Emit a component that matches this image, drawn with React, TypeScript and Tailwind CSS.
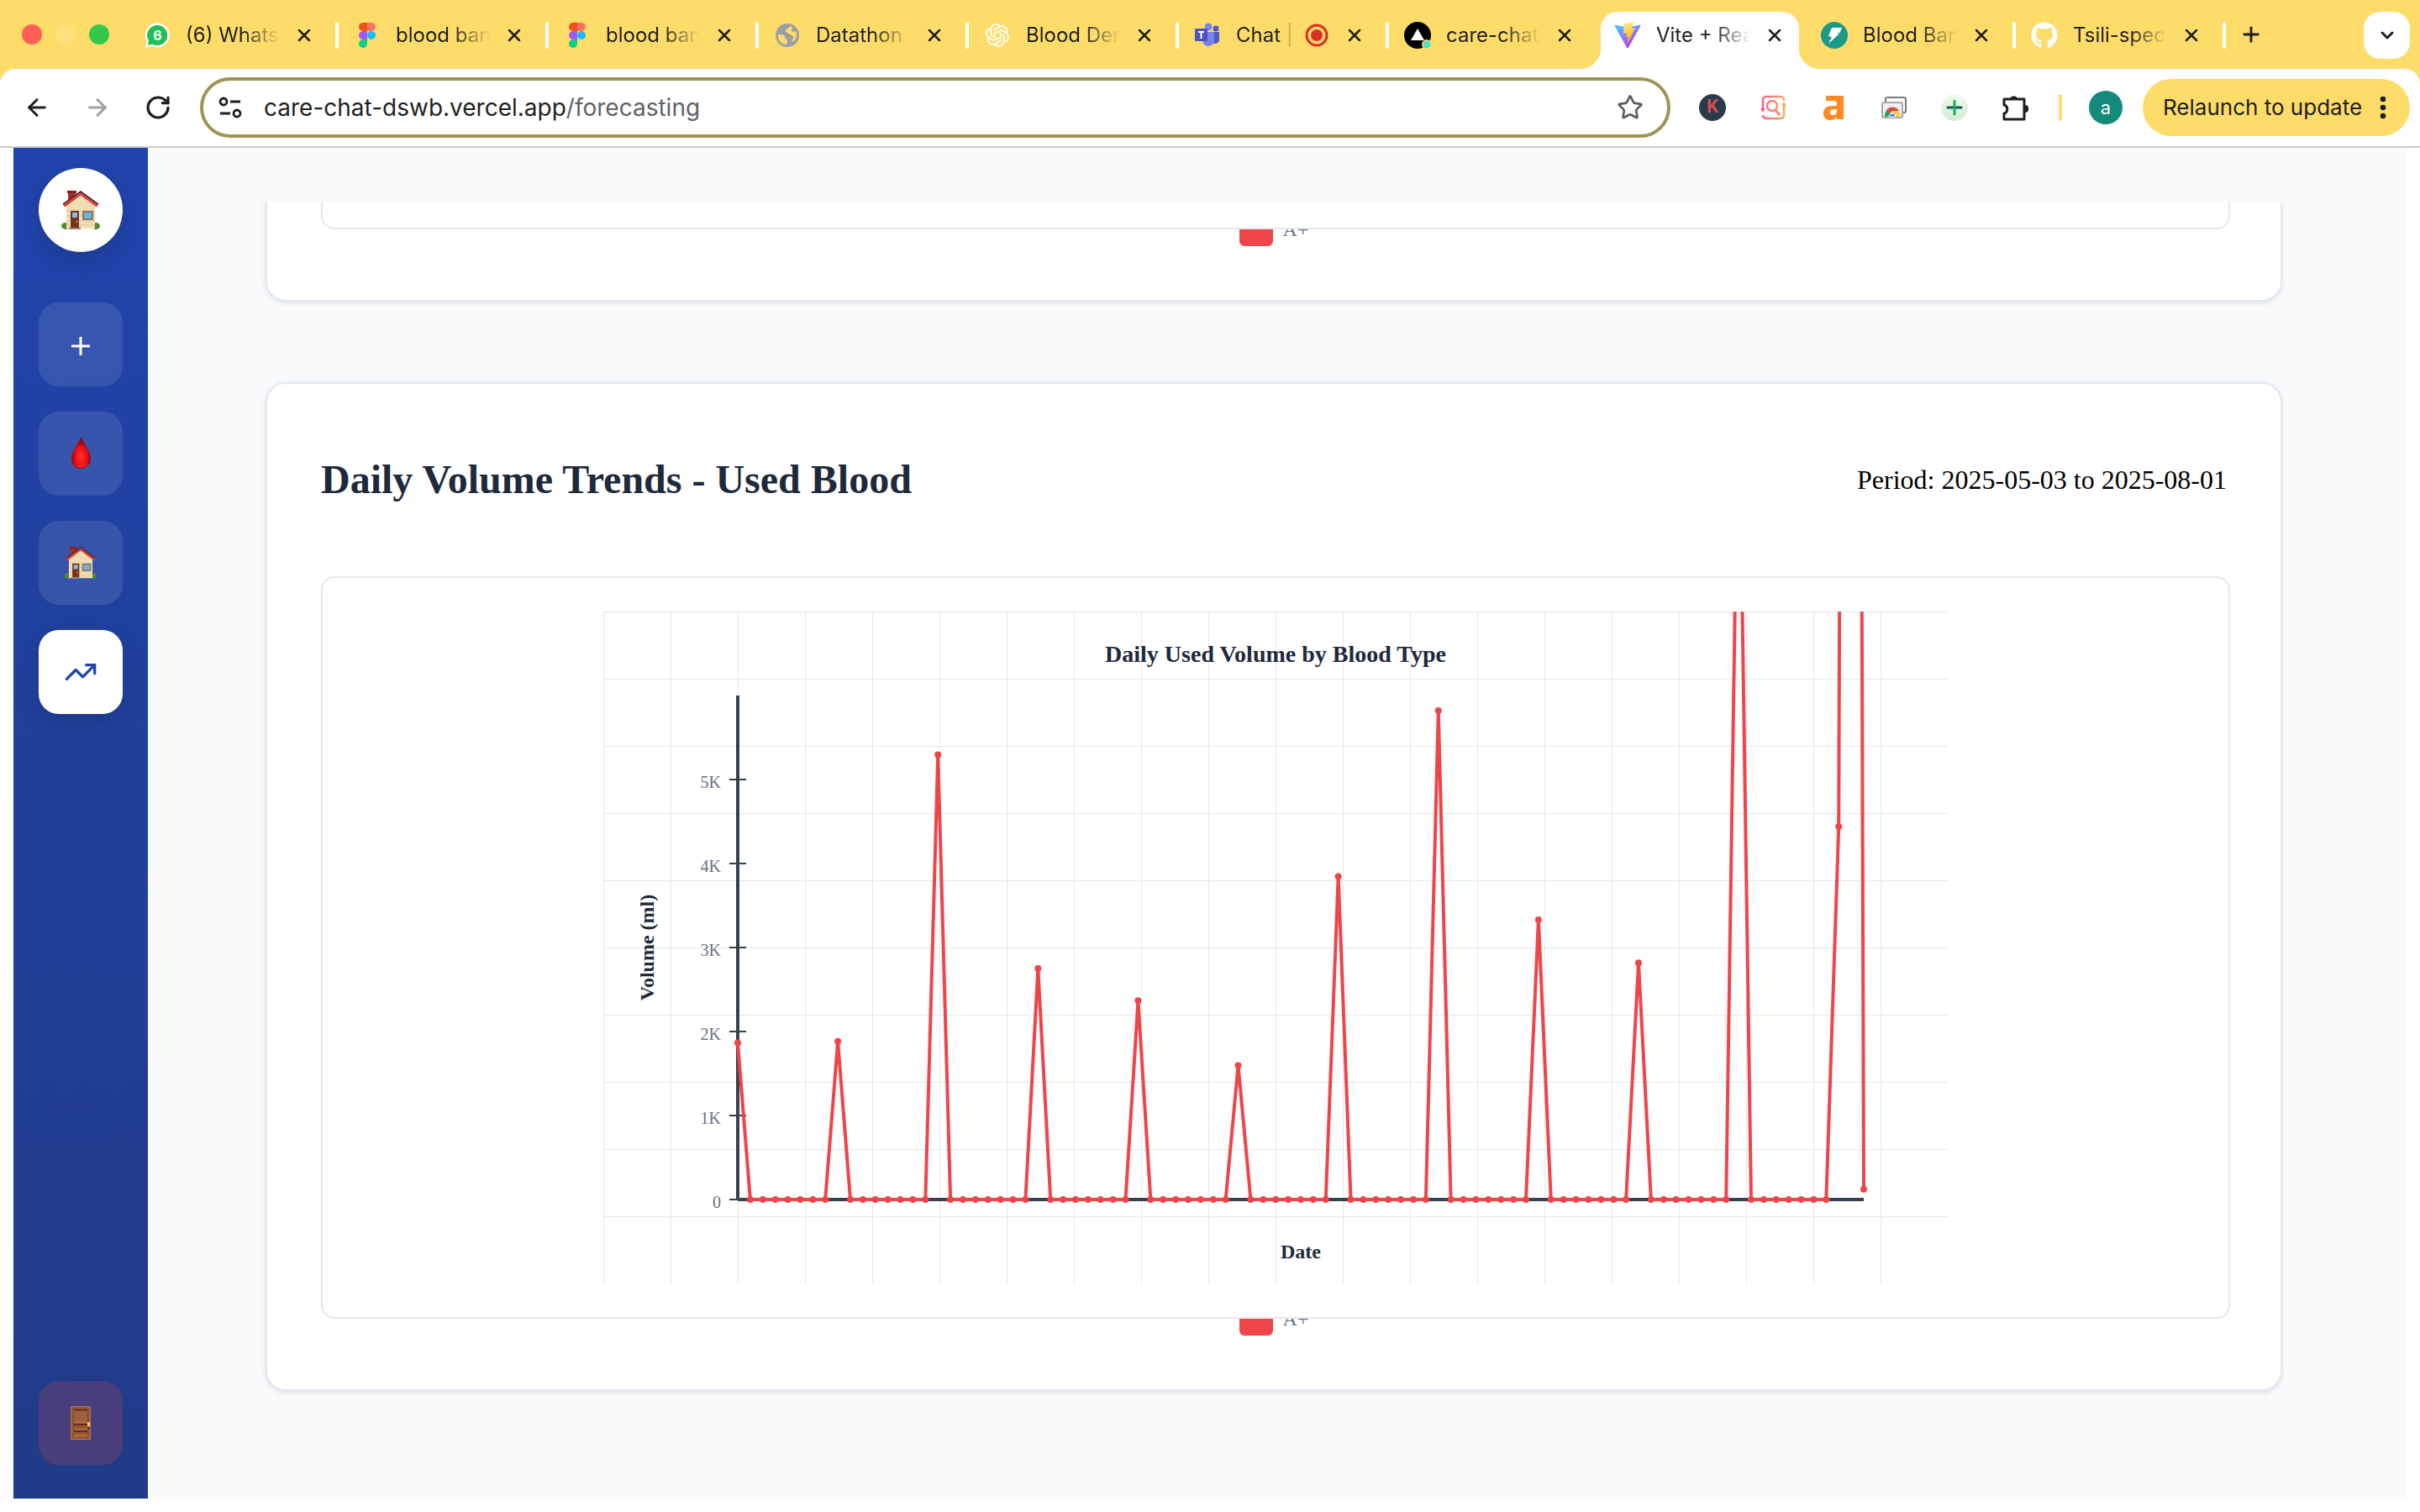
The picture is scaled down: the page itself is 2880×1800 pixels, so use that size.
import React from "react";
import { FaGithub } from "react-icons/fa";
import { SiOpenai } from "react-icons/si";
import { ArrowLeft, ArrowRight, ChevronDown, Plus, RotateCw, Star, TrendingUp, X } from "lucide-react";

/* ---------- favicons ---------- */

function WhatsAppIcon() {
  return (
    <svg viewBox="0 0 32 32" className="size-8">
      <path d="M2 31 L3.6 23 A14.6 14.6 0 1 1 9.5 28.8 Z" fill="#fff" />
      <path d="M5 28 L6 22.5 A12 12 0 1 1 10 26.4 Z" fill="#1fbf55" />
      <text x="16.5" y="22" textAnchor="middle" fontSize="16" fontWeight="700" fill="#fff" fontFamily="Inter, sans-serif">
        6
      </text>
    </svg>
  );
}

function FigmaIcon() {
  return (
    <svg viewBox="0 0 32 32" className="size-8">
      <path d="M11 1h5v10h-5a5 5 0 0 1 0-10Z" fill="#f24e1e" />
      <path d="M16 1h5a5 5 0 0 1 0 10h-5Z" fill="#ff7262" />
      <path d="M11 11h5v10h-5a5 5 0 0 1 0-10Z" fill="#a259ff" />
      <circle cx="21" cy="16" r="5" fill="#1abcfe" />
      <path d="M11 21h5v5a5 5 0 1 1-5-5Z" fill="#0acf83" />
    </svg>
  );
}

function GlobeIcon() {
  return (
    <svg viewBox="0 0 32 32" className="size-8">
      <circle cx="16" cy="16" r="14" fill="#9a9fa5" />
      <path d="M5 15c4 0 8 0 8 3 0 2 3 2 3 5 0 1-1 2-1 4-6 0-11-6-10-12Z" fill="#fedc69" />
      <path d="M19 5c-1 3-5 3-5 6 0 2 4 2 4 4 3 0 5 1 5 4 0 2-2 3-1 5 5-3 6-9 4-13-2 1-5 1-5-1 0-2 1-3 1-4Z" fill="#fedc69" />
    </svg>
  );
}

function TeamsIcon() {
  return (
    <svg viewBox="0 0 32 32" className="size-8">
      <circle cx="26" cy="8" r="3.5" fill="#5059c9" />
      <path d="M21 12h9v9a5 5 0 0 1-9 3Z" fill="#5059c9" />
      <circle cx="17" cy="6" r="4.5" fill="#7b83eb" />
      <path d="M10 12h14v10a7 7 0 0 1-14 0Z" fill="#7b83eb" />
      <rect x="1" y="8" width="15" height="15" rx="1" fill="#4b53bc" />
      <path d="M5 12h7M8.500 12v8" stroke="#fff" strokeWidth="2" />
    </svg>
  );
}

function VercelIcon() {
  return (
    <svg viewBox="0 0 32 32" className="size-8">
      <circle cx="16" cy="16" r="16" fill="#000" />
      <path d="M16 8 L24 22 H8 Z" fill="#fff" />
      <circle cx="27" cy="27" r="6" fill="#fedc69" />
      <circle cx="27" cy="27" r="4.500" fill="#50e3c2" />
    </svg>
  );
}

function ViteIcon() {
  return (
    <svg viewBox="0 0 32 32" className="size-8">
      <defs>
        <linearGradient id="vite-a" x1="0" y1="0" x2="0.6" y2="1">
          <stop offset="0" stopColor="#41d1ff" />
          <stop offset="1" stopColor="#bd34fe" />
        </linearGradient>
        <linearGradient id="vite-b" x1="0.4" y1="0" x2="0.6" y2="1">
          <stop offset="0" stopColor="#ffea83" />
          <stop offset="1" stopColor="#ffa800" />
        </linearGradient>
      </defs>
      <path d="M31.300 5 16.800 31a.8.8 0 0 1-1.400 0L.6 5a.8.8 0 0 1 .8-1.200L16 6.400l14.500-2.600a.8.8 0 0 1 .8 1.200Z" fill="url(#vite-a)" />
      <path d="M22.500 0 12 2.100a.4.4 0 0 0-.3.400L11 13.400c0 .3.200.5.500.4l3-.7c.3 0 .5.200.5.500l-.9 4.300c0 .3.200.5.500.5l1.800-.6c.3 0 .6.200.5.500l-1.400 6.700c-.1.400.5.600.7.300L25 7.700c.2-.3-.1-.6-.4-.6l-3.100.6c-.3 0-.500-.2-.500-.5l2-6.800c.1-.3-.2-.4-.5-.4Z" fill="url(#vite-b)" />
    </svg>
  );
}

function BoltIcon() {
  return (
    <svg viewBox="0 0 32 32" className="size-8">
      <circle cx="16" cy="16" r="16" fill="#1c9a88" />
      <path d="M13 7h12l-2.500 6h-4l3.500 1L9 26l4-8-4-1Z" fill="#fff" />
    </svg>
  );
}

/* ---------- sidebar drawings ---------- */

function House({ className }: { className: string }) {
  return (
    <svg viewBox="0 0 46 46" className={className}>
      <ellipse cx="5" cy="42" rx="5" ry="4" fill="#4f8a2c" />
      <ellipse cx="41" cy="42" rx="5" ry="4" fill="#4f8a2c" />
      <rect x="8" y="1" width="9" height="14" fill="#a32f2b" />
      <rect x="7" y="0" width="11" height="3" fill="#7c2421" />
      <path d="M6 18 L23 4 L40 18 V45 H6 Z" fill="#f1dcb4" />
      <path d="M6 24h34M6 30h34M6 36h34M6 41h34" stroke="#dfc797" strokeWidth="1" />
      <path d="M3 18 L23 3 L43 18" fill="none" stroke="#d8403b" strokeWidth="4" />
      <path d="M2 16 L23 1 L44 16" fill="none" stroke="#33272a" strokeWidth="1.500" />
      <rect x="11" y="24" width="10" height="20" fill="#74331f" />
      <rect x="13" y="26" width="6" height="6" fill="#7cc0e8" />
      <circle cx="18.500" cy="37" r="1" fill="#f2c14b" />
      <rect x="25" y="24" width="13" height="11" fill="#8d7560" />
      <rect x="27" y="26" width="9" height="7" fill="#6fb4e0" />
      <rect x="9" y="44" width="14" height="2" fill="#8d8379" />
    </svg>
  );
}

function Drop() {
  return (
    <svg viewBox="0 0 24 40" className="h-10 w-6">
      <defs>
        <radialGradient id="drop" cx="0.5" cy="0.62" r="0.5">
          <stop offset="0" stopColor="#ff2d2d" />
          <stop offset="0.6" stopColor="#ee1017" />
          <stop offset="1" stopColor="#8c060c" />
        </radialGradient>
      </defs>
      <path d="M12.500 0 C15.500 8 24 17 24 26 A11.500 12 0 0 1 1 26 C1 17 9.500 8 12.500 0 Z" fill="url(#drop)" />
      <path d="M3.500 32 a10.500 8 0 0 0 18 0 a12 7 0 0 1-18 0Z" fill="#ff2a2a" />
    </svg>
  );
}

function Door() {
  return (
    <svg viewBox="0 0 24 40" className="h-10 w-6">
      <rect width="24" height="40" fill="#a8786a" />
      <rect x="1" y="1" width="22" height="38" fill="#99572f" />
      <rect x="4" y="4" width="16" height="14" fill="#9f5f3d" />
      <path d="M4 4.500h16M4 22h16M4 30h16" stroke="#61301b" strokeWidth="2" />
      <path d="M4 19h16M4 27.500h16M4 35h16" stroke="#b5714a" strokeWidth="1.500" />
      <path d="M3.500 4v32M20.500 4v32" stroke="#83452a" strokeWidth="1" />
      <rect x="20" y="19" width="3" height="5" fill="#f4d03a" />
      <rect x="21" y="25" width="2" height="3" fill="#5b2c16" />
    </svg>
  );
}

/* ---------- browser chrome ---------- */

type TabInfo = { title: string; icon: React.ReactNode; recording?: boolean; active?: boolean; plain?: boolean };

const tabs: TabInfo[] = [
  { title: "(6) Whats", icon: <WhatsAppIcon /> },
  { title: "blood ban", icon: <FigmaIcon /> },
  { title: "blood ban", icon: <FigmaIcon /> },
  { title: "Datathon", icon: <GlobeIcon /> },
  { title: "Blood Der", icon: <SiOpenai className="mx-0.5 size-7 text-white" /> },
  { title: "Chat |", icon: <TeamsIcon />, recording: true },
  { title: "care-chat", icon: <VercelIcon />, plain: true },
  { title: "Vite + Rea", icon: <ViteIcon />, active: true },
  { title: "Blood Ban", icon: <BoltIcon /> },
  { title: "Tsili-spec", icon: <FaGithub className="size-8 text-white" /> },
];

function Tab({ tab }: { tab: TabInfo }) {
  return (
    <div className={`relative flex h-[68px] shrink items-center self-end ${tab.active ? "w-[246px]" : "w-[250px] pb-3"}`}>
      {tab.active && (
        <div className="absolute inset-y-0 left-0.5 right-2 rounded-t-[20px] bg-white">
          <span className="absolute bottom-0 right-full size-6 bg-[radial-gradient(circle_at_0_0,transparent_24px,white_24px)]" />
          <span className="absolute bottom-0 left-full size-6 bg-[radial-gradient(circle_at_100%_0,transparent_24px,white_24px)]" />
        </div>
      )}
      <div className={`relative flex w-full items-center pl-[18px] ${tab.active ? "pb-3" : ""}`}>
        <span className="shrink-0">{tab.icon}</span>
        <button
          className={`ml-[18px] whitespace-nowrap text-left text-2xl leading-8 text-[#1f1f1f] mask-r-to-100% ${tab.recording ? "w-[68px] mask-r-from-75%" : "w-[112px] mask-r-from-60%"}`}
        >
          {tab.title}
        </button>
        {tab.recording && (
          <svg viewBox="0 0 28 28" className="ml-3.5 mr-0.5 size-7">
            <circle cx="14" cy="14" r="12" fill="none" stroke="#d93025" strokeWidth="3" />
            <circle cx="14" cy="14" r="7" fill="#d93025" />
          </svg>
        )}
        <button aria-label="Close tab" className="ml-[17px] text-[#1f1f1f]">
          <X className="size-6" strokeWidth={2.500} />
        </button>
        {!tab.active && !tab.plain && <span className="ml-auto h-8 w-1 rounded-sm bg-white" />}
      </div>
    </div>
  );
}

function TabStrip() {
  return (
    <div className="flex h-[82px] items-end bg-[#fedc69]">
      <div className="flex h-[82px] w-[153px] shrink-0 items-center gap-4 pl-[26px]">
        <span className="size-6 rounded-full bg-[#fe5f57]" />
        <span className="size-6 rounded-full bg-[#fee07c]" />
        <span className="size-6 rounded-full bg-[#34c84a]" />
      </div>
      {tabs.map((tab, i) => (
        <Tab key={i} tab={tab} />
      ))}
      <button aria-label="New tab" className="mb-[27px] ml-4 text-[#1f1f1f]">
        <Plus className="size-7" strokeWidth={2.500} />
      </button>
      <button aria-label="Search tabs" className="mb-3 ml-auto mr-3 flex h-14 w-[55px] items-center justify-center rounded-[20px] bg-white">
        <ChevronDown className="size-6 text-[#1f1f1f]" strokeWidth={3} />
      </button>
    </div>
  );
}

function Toolbar() {
  return (
    <div className="bg-[#fedc69]">
      <div className="flex h-[94px] items-center rounded-t-[18px] border-b-2 border-[#cbcbcb] bg-white pr-3">
        <div className="flex w-[238px] shrink-0 items-center gap-10 pl-7 text-[#1f1f1f]">
          <button aria-label="Back">
            <ArrowLeft className="size-8" strokeWidth={2.200} />
          </button>
          <button aria-label="Forward" className="text-[#9f9f9f]">
            <ArrowRight className="size-8" strokeWidth={2.200} />
          </button>
          <button aria-label="Reload">
            <RotateCw className="size-8" strokeWidth={2.400} />
          </button>
        </div>
        <div className="relative flex h-[72px] flex-1 items-center rounded-full border-4 border-[#9f9552] pl-[18px] pr-7">
          <svg viewBox="0 0 28 28" className="size-7" fill="none" stroke="#1f1f1f" strokeWidth="2.800">
            <circle cx="6" cy="7" r="4" />
            <path d="M14 7h12M2 21h12" />
            <circle cx="22" cy="21" r="4" />
          </svg>
          <label className="ml-[26px] flex flex-1 items-center text-[28px] leading-9 text-[#1f1f1f]">
            <span>care-chat-dswb.vercel.app</span>
            <input aria-label="Address" defaultValue="/forecasting" className="min-w-0 flex-1 bg-transparent text-[#5f6368] outline-none" />
          </label>
          <button aria-label="Bookmark this tab" className="text-[#5a5a5a]">
            <Star className="size-8" strokeWidth={2} />
          </button>
        </div>
        <div className="ml-[34px] flex items-center gap-10">
          <button aria-label="Keyword extension" className="flex size-8 items-center justify-center rounded-full bg-[#2b3a4a] font-['Liberation_Mono',monospace] text-2xl font-bold leading-8 text-[#c9504e]">
            K
          </button>
          <button aria-label="Image search extension">
            <svg viewBox="0 0 32 32" className="size-8" fill="none" strokeWidth="2.500">
              <defs>
                <linearGradient id="search-g" gradientUnits="userSpaceOnUse" x1="2" y1="16" x2="30" y2="16">
                  <stop offset="0" stopColor="#f8608f" />
                  <stop offset="1" stopColor="#fba95a" />
                </linearGradient>
              </defs>
              <path d="M4 18V7a4 4 0 0 1 4-4h17a4 4 0 0 1 4 4v1M29 14v11a4 4 0 0 1-4 4H8a4 4 0 0 1-4-4" stroke="url(#search-g)" />
              <circle cx="15" cy="14" r="6" stroke="url(#search-g)" />
              <path d="M19 19l5 6" stroke="#fa8a73" strokeWidth="3" />
              <path d="M1 17h6l-3 5Z" fill="#f8608f" />
              <path d="M26 14h6l-3-5Z" fill="#fba95a" />
            </svg>
          </button>
          <button aria-label="Shopping extension" className="flex size-8 items-center justify-center">
            <svg viewBox="0 0 32 32" className="size-8">
              <path d="M7 2h21v28h-8v-3c-2 3-5 4-8 4-5 0-8-3-8-8 0-6 4-9 11-9h5v-2c0-3-1-4-5-4H7Z M20 18h-3c-4 0-5 2-5 4 0 2 1 3 3 3 3 0 5-2 5-5Z" fill="#ff8a24" fillRule="evenodd" />
            </svg>
          </button>
          <button aria-label="Gallery extension">
            <svg viewBox="0 0 32 32" className="size-8">
              <rect x="6" y="4" width="24" height="18" rx="2" fill="#fff" stroke="#77797c" strokeWidth="2" />
              <rect x="2" y="10" width="24" height="18" rx="2" fill="#f1f1f1" stroke="#a5a7a9" strokeWidth="2" />
              <path d="M5 27a9 9 0 0 1 3-8l6 7Z" fill="#1e9e52" />
              <path d="M7 19a9 9 0 0 1 15 1h-8l-3 3Z" fill="#d94a3f" />
              <path d="M14 20h8a9 9 0 0 1 1 7h-9Z" fill="#fbc94a" />
              <path d="M10 27a4 4 0 1 1 8 0Z" fill="#3c7fee" stroke="#fff" strokeWidth="1" />
            </svg>
          </button>
          <button aria-label="Add extension" className="flex size-8 items-center justify-center rounded-full bg-linear-to-b from-[#f2f9f1] to-[#d3ebd2]">
            <svg viewBox="0 0 20 20" className="size-5" strokeWidth="3" strokeLinecap="round">
              <path d="M2 10h16" stroke="#0e5b54" />
              <path d="M10 2v16" stroke="#18b25f" />
            </svg>
          </button>
          <button aria-label="Extensions">
            <svg viewBox="0 0 32 36" className="h-9 w-8" fill="none" stroke="#1f1f1f" strokeWidth="3" strokeLinejoin="round">
              <path d="M3 8h24v24H3v-7c5-1 5-9 0-10Z" />
              <path d="M10 7a5 5 0 0 1 9 0ZM28 15a4 4 0 0 1 0 9Z" fill="#1f1f1f" stroke="none" />
            </svg>
          </button>
        </div>
        <span className="ml-9 h-8 w-1 rounded-sm bg-[#fedc69]" />
        <button aria-label="Profile" className="ml-8 flex size-10 items-center justify-center rounded-full bg-[#138a7a] text-[22px] leading-8 text-white">
          a
        </button>
        <button className="ml-6 flex h-[68px] w-[318px] items-center justify-between rounded-full bg-[#fedc69] pl-6 pr-7 text-[26px] leading-9 text-[#1f1f1f]">
          <span className="whitespace-nowrap">Relaunch to update</span>
          <svg viewBox="0 0 8 28" className="h-7 w-2" fill="#1f1f1f">
            <circle cx="4" cy="4" r="3.300" />
            <circle cx="4" cy="14" r="3.300" />
            <circle cx="4" cy="24" r="3.300" />
          </svg>
        </button>
      </div>
    </div>
  );
}

/* ---------- page ---------- */

function Sidebar() {
  const item = "flex size-[100px] items-center justify-center rounded-3xl";
  return (
    <nav className="flex w-40 shrink-0 flex-col items-center bg-linear-to-b from-[#2144ac] to-[#203b87] pb-10 pt-6">
      <div className="flex size-[100px] items-center justify-center rounded-full bg-white shadow-[0_8px_24px_rgba(0,0,0,0.15)]">
        <House className="size-[46px]" />
      </div>
      <div className="mt-[60px] flex flex-col gap-[30px]">
        <button aria-label="Add" className={`${item} bg-white/10 pt-1 text-white`}>
          <svg viewBox="0 0 22 22" className="size-[22px]" stroke="#fff" strokeWidth="3">
            <path d="M0 11h22M11 0v22" />
          </svg>
        </button>
        <button aria-label="Blood inventory" className={`${item} bg-white/10`}>
          <Drop />
        </button>
        <button aria-label="Home" className={`${item} bg-white/10`}>
          <House className="size-[38px]" />
        </button>
        <button aria-label="Forecasting" className={`${item} bg-white text-[#2144ac] shadow-[0_8px_24px_rgba(0,0,0,0.15)]`}>
          <TrendingUp className="size-10" strokeWidth={2} />
        </button>
      </div>
      <button aria-label="Log out" className={`${item} mt-auto bg-[#ef4444]/20`}>
        <Door />
      </button>
    </nav>
  );
}

const DAYS = 91;
const usage: Record<number, number> = {
  0: 1866, 8: 1882, 16: 5296, 24: 2749, 32: 2367, 40: 1596, 48: 3846, 56: 5821,
  64: 3331, 72: 2818, 80: 9950, 88: 4440, 89: 47000, 90: 122,
};
const points = Array.from({ length: DAYS }, (_, day) => ({
  x: 160 + (day * 1340) / (DAYS - 1),
  y: 700 - (usage[day] ?? 0) / 10,
}));

function UsageChart() {
  return (
    <svg viewBox="0 0 1600 800" className="mx-auto block w-full max-w-[1600px] font-['Liberation_Serif',serif]" role="img" aria-label="Daily used volume by blood type">
      <defs>
        <pattern id="grid" width="80" height="80" patternUnits="userSpaceOnUse">
          <path d="M80 0H0V80" fill="none" stroke="#e5e7eb" strokeWidth="2" />
        </pattern>
      </defs>
      <rect width="1600" height="800" fill="url(#grid)" />
      <text x="800" y="60" textAnchor="middle" fontSize="28" fontWeight="700" fill="#1e293b">
        Daily Used Volume by Blood Type
      </text>
      <path d="M160 100V700M160 700H1500" stroke="#374151" strokeWidth="4" />
      {[0, 1, 2, 3, 4, 5].map((k) => (
        <g key={k}>
          <path d={`M150 ${700 - k * 100}H170`} stroke="#374151" strokeWidth="2" />
          <text x="140" y={710 - k * 100} textAnchor="end" fontSize="20" fill="#6b7280">
            {k === 0 ? "0" : `${k}K`}
          </text>
        </g>
      ))}
      <polyline points={points.map((p) => `${p.x},${p.y}`).join(" ")} fill="none" stroke="#ef4549" strokeWidth="4" />
      {points.map((p, i) => (
        <circle key={i} cx={p.x} cy={p.y} r="4" fill="#ef4549" />
      ))}
      <text x="830" y="770" textAnchor="middle" fontSize="24" fontWeight="700" fill="#1e293b">
        Date
      </text>
      <text transform="translate(60 400) rotate(-90)" textAnchor="middle" fontSize="24" fontWeight="700" fill="#1e293b">
        Volume (ml)
      </text>
    </svg>
  );
}

function Legend() {
  return (
    <div className="-mt-5 flex items-center justify-center gap-3">
      <span className="size-10 rounded-md bg-[#ef4549]" />
      <span className="text-2xl leading-7 text-[#64748b]">A+</span>
    </div>
  );
}

export default function App() {
  return (
    <div className="flex min-h-screen flex-col bg-white font-[Inter,'Liberation_Sans',sans-serif]">
      <header>
        <TabStrip />
        <Toolbar />
      </header>
      <div className="mx-4 mb-4 flex flex-1 bg-[#f8fafc]">
        <Sidebar />
        <main className="min-w-0 flex-1 pr-2 pt-16 font-['Liberation_Serif',serif]">
          <div className="overflow-hidden">
            <div className="mx-auto flex max-w-[2408px] flex-col gap-24 px-1 pb-[120px]">
              <section className="rounded-b-3xl border-2 border-t-0 border-[#e2e8f0] bg-white px-16 pb-16 shadow-[0_2px_6px_rgba(0,0,0,0.1)]">
                <div className="relative z-10 -mr-1 h-[33px] rounded-b-2xl border-2 border-t-0 border-[#e5e7eb] bg-white" />
                <Legend />
              </section>
              <section className="rounded-3xl border-2 border-[#e2e8f0] bg-white p-16 shadow-[0_2px_6px_rgba(0,0,0,0.1)]">
                <div className="mb-[65px] flex items-center justify-between py-[22px]">
                  <h2 className="text-5xl leading-[56px] font-bold text-[#1e293b]">Daily Volume Trends - Used Blood</h2>
                  <p className="text-[32px] leading-10 text-black">Period: 2025-05-03 to 2025-08-01</p>
                </div>
                <div className="relative z-10 -mr-1 rounded-2xl border-2 border-[#e5e7eb] bg-white p-10">
                  <UsageChart />
                </div>
                <Legend />
              </section>
            </div>
          </div>
        </main>
      </div>
    </div>
  );
}
